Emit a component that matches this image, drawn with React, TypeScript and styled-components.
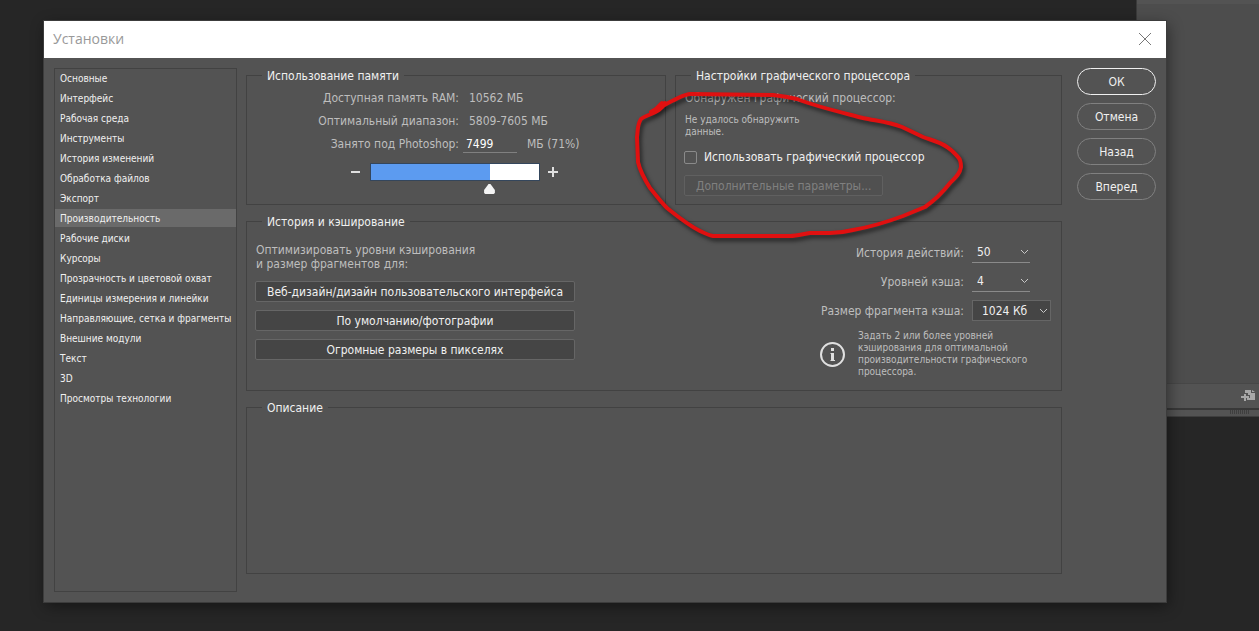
import React, { useState } from 'react';
import styled, { createGlobalStyle, css } from 'styled-components';

const color = {
  desktop: '#262626',
  surface: '#535353',
  line: '#424242',
  field: '#454545',
  fieldLine: '#666666',
  text: '#f0f0f0',
  label: '#bebebe',
  accent: '#5c9bf0',
};

const GlobalStyle = createGlobalStyle`
  *, *::before, *::after { box-sizing: border-box; }
  body {
    margin: 0;
    background: ${color.desktop};
    color: ${color.text};
    font-family: Tahoma, "DejaVu Sans Condensed", sans-serif;
    font-size: 12px;
    line-height: 14px;
  }
  button, input, select { font: inherit; color: inherit; }
`;

const Desktop = styled.div`
  position: relative;
  display: flex;
  min-height: 100vh;
  padding: 21px 93px 29px 44px;
`;

/* Application panel that is partly covered by the dialog */
const DockPanel = styled.aside`
  position: absolute;
  top: 0;
  right: 0;
  display: flex;
  flex-direction: column;
  width: 123px;
  height: 417px;
  border-left: 1px solid #3a3a3a;
  border-bottom: 1px solid #3e3e3e;
  background: ${color.surface};
`;

const DockContent = styled.div`
  flex: 1;
  margin-top: 4px;
  border-bottom: 1px solid #474747;
  background: #4d4d4d;
`;

const DockFooter = styled.div`
  display: flex;
  align-items: center;
  justify-content: flex-end;
  height: 26px;
  padding-right: 4px;
  border-bottom: 2px solid #383838;
`;

const DockGrip = styled.div`
  align-self: flex-end;
  width: 20px;
  height: 4px;
  margin: 0 9px 2px 0;
  background: repeating-linear-gradient(90deg, #3f3f3f 0 1px, ${color.surface} 1px 2px);
`;

const Dialog = styled.section`
  position: relative;
  display: flex;
  flex: 1;
  flex-direction: column;
  min-width: 0;
  background: ${color.surface};
  box-shadow: 0 0 0 1px #3c3c3c, 2px 4px 14px rgba(0, 0, 0, 0.45);
`;

const TitleBar = styled.header`
  display: flex;
  align-items: center;
  justify-content: space-between;
  height: 37px;
  padding: 0 14px 1px 9px;
  background: #ffffff;
`;

const Title = styled.h1`
  margin: 0;
  color: #999999;
  font-family: "Segoe UI", "Open Sans", sans-serif;
  font-size: 14px;
  font-weight: 400;
  line-height: 20px;
`;

const CloseButton = styled.button`
  display: flex;
  padding: 0;
  border: 0;
  background: none;
  color: #777777;
`;

const Body = styled.div`
  display: grid;
  flex: 1;
  grid-template-columns: 183px minmax(0, 1fr) 79px;
  padding: 10px;
`;

const Sidebar = styled.nav`
  border: 1px solid ${color.line};
`;

const Category = styled.a<{ $active?: boolean }>`
  display: block;
  margin-bottom: 2px;
  padding: 2px 0 0 5px;
  background: ${(p) => (p.$active ? '#6a6a6a' : 'transparent')};
  color: ${color.text};
  font-size: 10px;
  line-height: 16px;
  text-decoration: none;
  white-space: nowrap;
`;

const Settings = styled.main`
  display: grid;
  grid-template-columns: minmax(0, 420fr) minmax(0, 387fr);
  grid-template-rows: auto auto 1fr;
  gap: 9px;
  margin: 0 15px 18px 9px;
`;

const Group = styled.fieldset<{ $wide?: boolean }>`
  min-width: 0;
  margin: 0;
  padding: 0;
  border: 1px solid ${color.line};
  ${(p) => p.$wide && css`grid-column: 1 / -1;`}
`;

const GroupTitle = styled.legend`
  margin-left: 15px;
  padding: 1px 5px 0;
  line-height: 14px;
`;

const MemoryGrid = styled.div`
  display: grid;
  grid-template-columns: 1fr 1fr;
  grid-auto-rows: 23px;
  column-gap: 4px;
  align-items: center;
  padding: 3px 0 0 10px;
  color: ${color.label};
  white-space: nowrap;
`;

const MemoryLabel = styled.label`
  text-align: right;
`;

const MemoryValue = styled.span`
  padding-left: 6px;
`;

const MemoryEntry = styled.span`
  display: flex;
  align-items: center;
  gap: 10px;
`;

const NumberInput = styled.input`
  width: 54px;
  height: 19px;
  padding: 2px 3px 0;
  border: 0;
  border-bottom: 1px solid #808080;
  background: none;
  color: #ffffff;
`;

const SliderRow = styled.div`
  display: flex;
  align-items: center;
  justify-content: center;
  gap: 8px;
  margin: 8px 0 23px;
  padding-right: 2px;
`;

const StepButton = styled.button`
  display: flex;
  padding: 0;
  border: 0;
  background: none;
`;

const Slider = styled.input`
  width: 170px;
  height: 18px;
  margin: 0;
  appearance: none;
  background: none;

  &::-webkit-slider-runnable-track {
    height: 18px;
    border: 1px solid #34465c;
    background: linear-gradient(90deg, ${color.accent} 71%, #ffffff 71%);
  }
  &::-webkit-slider-thumb {
    width: 12px;
    height: 10px;
    margin-top: 20px;
    appearance: none;
    background: #f4f4f4;
    clip-path: polygon(42% 0, 58% 0, 95% 60%, 95% 90%, 85% 100%, 15% 100%, 5% 90%, 5% 60%);
  }
`;

const GpuContent = styled.div`
  display: flex;
  flex-direction: column;
  align-items: flex-start;
  padding: 8px 8px 0;
`;

const Label = styled.span`
  padding-left: 1px;
  color: ${color.label};
`;

const Note = styled.p`
  margin: 0;
  color: ${color.label};
  font-size: 10px;
  line-height: 12px;
`;

const GpuNote = styled(Note)`
  max-width: 124px;
  margin-top: 9px;
  padding-left: 1px;
`;

const CheckRow = styled.label`
  display: flex;
  align-items: center;
  gap: 7px;
  margin: 12px 0 11px;
`;

const CheckBox = styled.input`
  width: 13px;
  height: 13px;
  margin: 0;
  appearance: none;
  border: 1px solid #8a8a8a;
  border-radius: 2px;
  &:checked { background: ${color.accent}; }
`;

const FlatButton = styled.button`
  height: 21px;
  padding: 1px 11px 0;
  border: 1px solid ${color.fieldLine};
  border-radius: 2px;
  background: ${color.field};
  line-height: 18px;
  white-space: nowrap;

  &:disabled {
    border-color: #606060;
    background: #505050;
    color: #808080;
  }
`;

const HistoryContent = styled.div`
  display: flex;
  justify-content: space-between;
  padding: 13px 10px 12px 8px;
`;

const Presets = styled.div`
  display: flex;
  flex-direction: column;
  gap: 8px;
  width: 320px;
`;

const PresetsHint = styled.p`
  margin: 1px 0 2px;
  padding-left: 1px;
  color: ${color.label};
`;

const CacheOptions = styled.div`
  display: grid;
  grid-template-columns: 145px 79px;
  gap: 8px;
`;

const OptionLabel = styled.label`
  padding-top: 1px;
  color: ${color.label};
  line-height: 20px;
  text-align: right;
  white-space: nowrap;
`;

const SelectBox = styled.span<{ $boxed?: boolean }>`
  display: flex;
  align-items: center;
  width: ${(p) => (p.$boxed ? '79px' : '58px')};
  height: 21px;
  padding-right: ${(p) => (p.$boxed ? '2px' : '1px')};
  border: 1px solid transparent;
  border-width: ${(p) => (p.$boxed ? '1px' : '0 0 1px')};
  border-color: ${(p) => (p.$boxed ? color.fieldLine : '#8a8a8a')};
  background: ${(p) => (p.$boxed ? color.field : 'none')};
`;

const Select = styled.select<{ $boxed?: boolean }>`
  flex: 1;
  min-width: 0;
  padding: 0 0 0 ${(p) => (p.$boxed ? '9px' : '5px')};
  border: 0;
  appearance: none;
  background: none;
`;

const Info = styled.div`
  display: flex;
  grid-column: 1 / -1;
  align-items: center;
  gap: 13px;
  margin-top: 1px;
  padding-left: 1px;
`;

const InfoNote = styled(Note)`
  width: 180px;
`;

const Actions = styled.div`
  display: flex;
  flex-direction: column;
  gap: 8px;
`;

const PillButton = styled.button<{ $primary?: boolean }>`
  height: 27px;
  padding: 0;
  border: ${(p) => (p.$primary ? '1px solid #f0f0f0' : '1px solid #808080')};
  border-radius: 14px;
  background: none;
`;

const Annotation = styled.svg`
  position: absolute;
  top: 65px;
  left: 586px;
  overflow: visible;
  pointer-events: none;
  filter: drop-shadow(2px 3px 2px rgba(0, 0, 0, 0.6));
`;

const categories = [
  'Основные',
  'Интерфейс',
  'Рабочая среда',
  'Инструменты',
  'История изменений',
  'Обработка файлов',
  'Экспорт',
  'Производительность',
  'Рабочие диски',
  'Курсоры',
  'Прозрачность и цветовой охват',
  'Единицы измерения и линейки',
  'Направляющие, сетка и фрагменты',
  'Внешние модули',
  'Текст',
  '3D',
  'Просмотры технологии',
];

const presets = [
  'Веб-дизайн/дизайн пользовательского интерфейса',
  'По умолчанию/фотографии',
  'Огромные размеры в пикселях',
];

const options = [
  { id: 'history', label: 'История действий:', value: '50' },
  { id: 'levels', label: 'Уровней кэша:', value: '4' },
  { id: 'tile', label: 'Размер фрагмента кэша:', value: '1024 Кб', boxed: true },
];

const Chevron = () => (
  <svg width="9" height="6" viewBox="0 0 9 6" fill="none" stroke="#c8c8c8" aria-hidden="true">
    <path d="M1 1l3.5 3.5L8 1" />
  </svg>
);

export default function App() {
  const [memory, setMemory] = useState('7499');

  return (
    <>
      <GlobalStyle />
      <Desktop>
        <DockPanel>
          <DockContent />
          <DockFooter>
            <svg width="14" height="12" viewBox="0 0 14 12" fill="#a8a8a8" aria-hidden="true">
              <path d="M4 0h6v3h4v7H6V8h3V5H7V3H4z" />
              <path d="M11 0l3 2h-3z" />
              <path d="M3 4h2v2h3v2H5v3H3V8H0V6h3z" />
            </svg>
          </DockFooter>
          <DockGrip />
        </DockPanel>

        <Dialog role="dialog" aria-labelledby="dialog-title">
          <TitleBar>
            <Title id="dialog-title">Установки</Title>
            <CloseButton aria-label="Закрыть">
              <svg width="14" height="14" viewBox="0 0 14 14" stroke="currentColor" aria-hidden="true">
                <path d="M1 1l12 12M13 1L1 13" />
              </svg>
            </CloseButton>
          </TitleBar>

          <Body>
            <Sidebar>
              {categories.map((name) => (
                <Category key={name} href="#" $active={name === 'Производительность'}>
                  {name}
                </Category>
              ))}
            </Sidebar>

            <Settings>
              <Group>
                <GroupTitle>Использование памяти</GroupTitle>
                <MemoryGrid>
                  <MemoryLabel as="span">Доступная память RAM:</MemoryLabel>
                  <MemoryValue>10562 МБ</MemoryValue>
                  <MemoryLabel as="span">Оптимальный диапазон:</MemoryLabel>
                  <MemoryValue>5809-7605 МБ</MemoryValue>
                  <MemoryLabel htmlFor="memory">Занято под Photoshop:</MemoryLabel>
                  <MemoryEntry>
                    <NumberInput id="memory" value={memory} onChange={(e) => setMemory(e.target.value)} />
                    МБ (71%)
                  </MemoryEntry>
                </MemoryGrid>
                <SliderRow>
                  <StepButton aria-label="Уменьшить">
                    <svg width="11" height="11" viewBox="0 0 11 11" fill="#e0e0e0" aria-hidden="true">
                      <path d="M0 4h9v2H0z" />
                    </svg>
                  </StepButton>
                  <Slider
                    type="range"
                    aria-label="Занято под Photoshop"
                    min={0}
                    max={10400}
                    value={Number(memory) || 0}
                    onChange={(e) => setMemory(e.target.value)}
                  />
                  <StepButton aria-label="Увеличить">
                    <svg width="11" height="11" viewBox="0 0 11 11" fill="#e0e0e0" aria-hidden="true">
                      <path d="M4 0h2v4h4v2H6v4H4V6H0V4h4z" />
                    </svg>
                  </StepButton>
                </SliderRow>
              </Group>

              <Group>
                <GroupTitle>Настройки графического процессора</GroupTitle>
                <GpuContent>
                  <Label>Обнаружен графический процессор:</Label>
                  <GpuNote>Не удалось обнаружить данные.</GpuNote>
                  <CheckRow>
                    <CheckBox type="checkbox" />
                    Использовать графический процессор
                  </CheckRow>
                  <FlatButton disabled>Дополнительные параметры...</FlatButton>
                </GpuContent>
              </Group>

              <Group $wide>
                <GroupTitle>История и кэширование</GroupTitle>
                <HistoryContent>
                  <Presets>
                    <PresetsHint>
                      Оптимизировать уровни кэширования
                      <br />и размер фрагментов для:
                    </PresetsHint>
                    {presets.map((name) => (
                      <FlatButton key={name}>{name}</FlatButton>
                    ))}
                  </Presets>
                  <CacheOptions>
                    {options.map(({ id, label, value, boxed }) => (
                      <React.Fragment key={id}>
                        <OptionLabel htmlFor={id}>{label}</OptionLabel>
                        <SelectBox $boxed={boxed}>
                          <Select id={id} $boxed={boxed}>
                            <option>{value}</option>
                          </Select>
                          <Chevron />
                        </SelectBox>
                      </React.Fragment>
                    ))}
                    <Info>
                      <svg width="25" height="25" viewBox="0 0 25 25" fill="none" stroke="#e0e0e0" aria-hidden="true">
                        <circle cx="12.5" cy="12.5" r="11.5" strokeWidth="2" />
                        <path d="M12.5 6v3" strokeWidth="3" />
                        <path d="M12.5 11v8" strokeWidth="3" />
                        <path d="M10.5 11.5h2M10.5 18.5h4.5" strokeWidth="1" />
                      </svg>
                      <InfoNote>
                        Задать 2 или более уровней
                        <br />
                        кэширования для оптимальной
                        <br />
                        производительности графического
                        <br />
                        процессора.
                      </InfoNote>
                    </Info>
                  </CacheOptions>
                </HistoryContent>
              </Group>

              <Group $wide>
                <GroupTitle>Описание</GroupTitle>
              </Group>
            </Settings>

            <Actions>
              <PillButton $primary>ОК</PillButton>
              <PillButton>Отмена</PillButton>
              <PillButton>Назад</PillButton>
              <PillButton>Вперед</PillButton>
            </Actions>
          </Body>

          <Annotation
            width="340"
            height="160"
            viewBox="630 86 340 160"
            fill="none"
            stroke="#e01010"
            strokeWidth="4"
            strokeLinecap="round"
            strokeLinejoin="round"
            aria-hidden="true"
          >
            <path d="M662 103L656 109L651 112C658 109 664 105 672 101C679 98 684 94 691 94L773 95C783 96 789 97 797 99C818 107 840 112 863 118C877 121 889 122 902 127L923 137C931 140 940 142 947 147C952 150 955 154 958 157C961 160 961 164 961 167C960 174 955 178 950 183C943 192 935 200 925 207L903 216C887 222 870 227 853 230C845 232 838 233 830 233L810 233C803 234 797 236 790 236L713 236C708 235 704 233 700 231C688 225 677 216 667 208C661 202 656 195 650 188C645 180 640 171 638 162L637 137C638 131 637 125 641 119C646 115 654 114 659 110C663 107 664 105 665 103" />
          </Annotation>
        </Dialog>
      </Desktop>
    </>
  );
}
